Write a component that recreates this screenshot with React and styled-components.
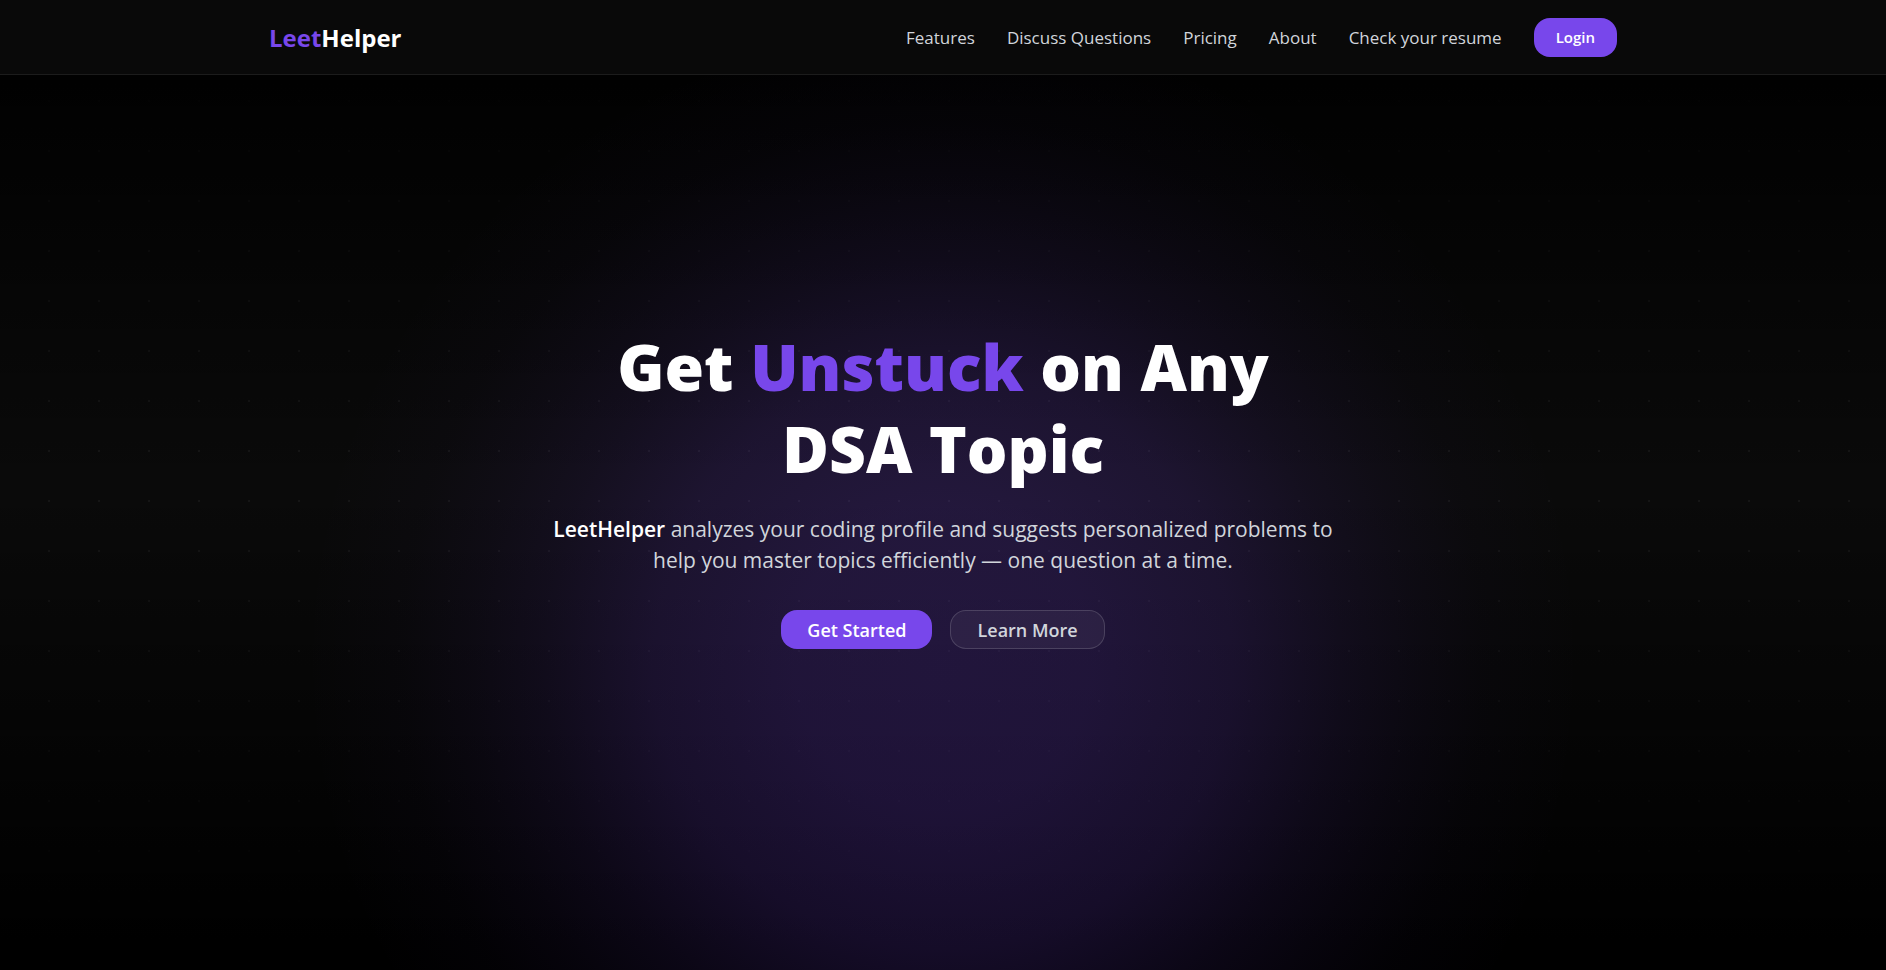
import React from 'react'
import styled, { createGlobalStyle } from 'styled-components'

const GlobalStyle = createGlobalStyle`
  * {
    box-sizing: border-box;
  }

  body {
    margin: 0;
    background: #000;
    color: #fff;
    font-family: 'Open Sans', 'Noto Sans', sans-serif;
  }
`

const navLinks = [
  { id: 1, label: 'Features', href: '#features' },
  { id: 2, label: 'Discuss Questions', href: '#discuss' },
  { id: 3, label: 'Pricing', href: '#pricing' },
  { id: 4, label: 'About', href: '#about' },
  { id: 5, label: 'Check your resume', href: '#resume' },
]

const App = () => {
  return (
    <PageStyled>
      <GlobalStyle />
      <HeaderStyled>
        <NavStyled>
          <Logo href='#home'><Accent>Leet</Accent>Helper</Logo>
          <Links>
            {navLinks.map(({ id, label, href }) => (
              <NavLink key={id} href={href}>{label}</NavLink>
            ))}
            <Button $small>Login</Button>
          </Links>
        </NavStyled>
      </HeaderStyled>

      <HeroStyled>
        <HeroTitle>Get <Accent>Unstuck</Accent> on Any DSA Topic</HeroTitle>
        <HeroText>
          <strong>LeetHelper</strong> analyzes your coding profile and suggests
          personalized problems to help you master topics efficiently — one question at a time.
        </HeroText>
        <Actions>
          <Button>Get Started</Button>
          <Button $outline>Learn More</Button>
        </Actions>
      </HeroStyled>
    </PageStyled>
  )
}

const PageStyled = styled.div`
  display: flex;
  flex-direction: column;
  min-height: 100vh;
  /* glow, edge fade, dot grid, base */
  background:
    radial-gradient(circle at 50% 68%, rgba(124, 72, 237, 0.23) 0, rgba(124, 72, 237, 0.22) 150px, rgba(124, 72, 237, 0.17) 290px, rgba(124, 72, 237, 0.09) 400px, rgba(124, 72, 237, 0.05) 470px, rgba(124, 72, 237, 0.02) 540px, transparent 640px),
    linear-gradient(#000 4%, transparent 50%, #000 97%),
    radial-gradient(circle at 49px 1px, rgba(255, 255, 255, 0.05) 1px, transparent 1px) 0 0 / 50px 50px,
    #0a0a0a;
`

const HeaderStyled = styled.header`
  background: #090909;
  border-bottom: 1px solid #1c1c1c;
`

const NavStyled = styled.nav`
  display: flex;
  align-items: center;
  justify-content: space-between;
  width: 100%;
  max-width: 1396px;
  min-height: 74px;
  margin: 0 auto;
  padding: 0 24px;
`

const Logo = styled.a`
  color: #fff;
  font-size: 24px;
  font-weight: 700;
  text-decoration: none;
`

const Accent = styled.span`
  color: #7847eb;
`

const Links = styled.div`
  display: flex;
  align-items: center;
  gap: 32px;
`

const NavLink = styled.a`
  color: #d1d5db;
  font-size: 17px;
  text-decoration: none;

  &:hover {
    color: #fff;
  }
`

const Button = styled.button`
  height: 39px;
  padding: 0 ${({ $small }) => ($small ? '22px' : '26px')};
  border: ${({ $outline }) => ($outline ? '1px solid rgba(255, 255, 255, 0.15)' : '0')};
  border-radius: 16px;
  background: ${({ $outline }) => ($outline ? 'rgba(255, 255, 255, 0.05)' : '#7847eb')};
  color: ${({ $outline }) => ($outline ? '#d1d5db' : '#fff')};
  font-family: inherit;
  font-size: ${({ $small }) => ($small ? '15px' : '18px')};
  font-weight: 600;
  cursor: pointer;
`

const HeroStyled = styled.main`
  display: flex;
  flex: 1;
  flex-direction: column;
  align-items: center;
  justify-content: center;
  padding: 24px 24px 94px;
  text-align: center;
`

const HeroTitle = styled.h1`
  max-width: 768px;
  margin: 0 0 24px;
  font-size: 64px;
  font-weight: 800;
  line-height: 82px;
`

const HeroText = styled.p`
  max-width: 800px;
  margin: 0 0 34px;
  color: #d1d5db;
  font-size: 21px;
  line-height: 31px;

  strong {
    color: #fff;
    font-weight: 600;
  }
`

const Actions = styled.div`
  display: flex;
  gap: 18px;
`

export default App
